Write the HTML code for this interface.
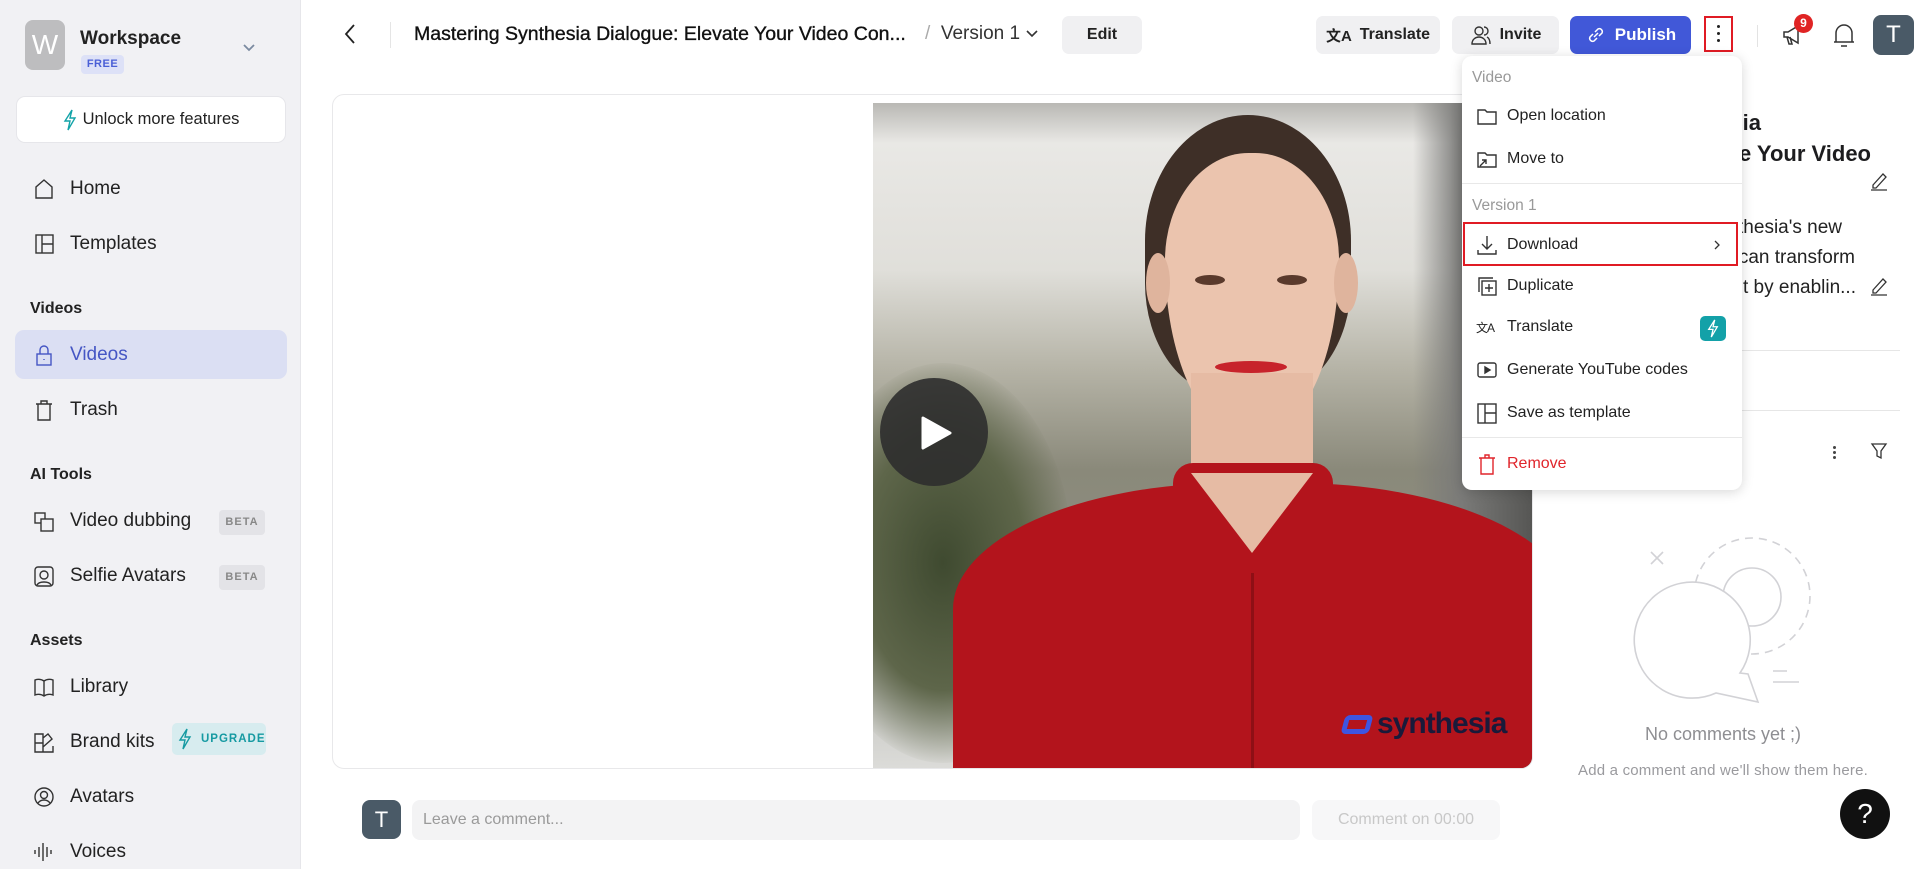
<!DOCTYPE html>
<html style="overflow:hidden"><head><meta charset="utf-8"><style>
*{box-sizing:border-box;margin:0;padding:0}
html,body{width:1920px;height:869px;overflow:hidden}
body{background:#fff;font-family:"Liberation Sans",Arial,"Noto Sans CJK SC",sans-serif;color:#1d1d1f;position:relative}
.a{position:absolute}
.side{left:0;top:0;width:301px;height:869px;background:#f1f1f4;border-right:1px solid #e6e6ea}
.nav{position:absolute;left:33px;font-size:19px;color:#222;display:flex;align-items:center;gap:15px;height:30px;white-space:nowrap}
.nav svg{width:22px;height:22px;fill:none;stroke:#333;stroke-width:1.4;flex:none}
.sec{position:absolute;left:30px;font-size:16px;font-weight:bold;color:#222}
.beta{position:absolute;left:219px;width:46px;height:25px;background:#e3e3e7;border-radius:4px;font-size:11px;color:#888;letter-spacing:1px;text-align:center;line-height:25px;font-weight:bold}
.btn{position:absolute;height:38px;border-radius:7px;background:#f0f0f2;font-size:17px;display:flex;align-items:center;justify-content:center;gap:8px;color:#222;white-space:nowrap}
.mi{position:absolute;left:1476px;font-size:16px;color:#222;display:flex;align-items:center;gap:9px;height:24px;white-space:nowrap}
.mi svg{width:22px;height:22px;fill:none;stroke:#333;stroke-width:1.4;flex:none}
.ml{position:absolute;left:1472px;font-size:15.5px;color:#999}
</style></head><body>
<div class="a side"></div>
<div class="a" style="left:25px;top:20px;width:40px;height:50px;background:#bdbdbf;border-radius:8px;color:#fff;font-size:28px;text-align:center;line-height:50px">W</div>
<div class="a" style="left:80px;top:28px;font-size:19px;font-weight:bold;color:#222">Workspace</div>
<div class="a" style="left:81px;top:55px;width:43px;height:19px;background:#dde1f7;border-radius:4px;color:#4a5fd6;font-size:11px;font-weight:bold;text-align:center;line-height:19px;letter-spacing:.5px">FREE</div>
<svg class="a" style="left:241px;top:42px" width="16" height="12" viewBox="0 0 16 12"><path d="M3 3l5 5 5-5" fill="none" stroke="#7b8aa0" stroke-width="1.8"/></svg>
<div class="a" style="left:16px;top:96px;width:270px;height:47px;background:#fff;border:1px solid #e6e6ea;border-radius:9px;display:flex;align-items:center;justify-content:center;gap:6px;font-size:16.5px;color:#222"><svg width="14" height="22" viewBox="0 0 14 22"><path d="M9 1L2 12h5l-2 9 7-12H7z" fill="none" stroke="#12a3a8" stroke-width="1.4"/></svg>Unlock more features</div>

<div class="nav" style="top:174px"><svg viewBox="0 0 22 22"><path d="M3 20V9l8-7 8 7v11z"/></svg>Home</div>
<div class="nav" style="top:229px"><svg viewBox="0 0 22 22"><rect x="3" y="2" width="17" height="18"/><path d="M9 2v18M9 11h11"/></svg>Templates</div>
<div class="sec" style="top:300px">Videos</div>
<div class="a" style="left:15px;top:330px;width:272px;height:49px;background:#dbdff3;border-radius:9px"></div>
<div class="nav" style="top:340px;color:#4556c4"><svg viewBox="0 0 22 22" style="stroke:#4556c4"><rect x="4" y="10" width="14" height="11"/><path d="M7 10V6a4 4 0 018 0v4M11 15v1"/></svg>Videos</div>
<div class="nav" style="top:395px"><svg viewBox="0 0 22 22"><path d="M5 5h12v16H5zM3 5h16M8 5V2h6v3"/></svg>Trash</div>
<div class="sec" style="top:466px">AI Tools</div>
<div class="nav" style="top:506px"><svg viewBox="0 0 22 22"><rect x="2" y="3" width="10" height="10"/><rect x="8" y="9" width="12" height="12" fill="#f1f1f4"/></svg>Video dubbing</div>
<div class="beta" style="top:510px">BETA</div>
<div class="nav" style="top:561px"><svg viewBox="0 0 22 22"><rect x="2" y="2" width="18" height="19" rx="3"/><circle cx="11" cy="10" r="4"/><path d="M4 20c2-4 12-4 14 0"/></svg>Selfie Avatars</div>
<div class="beta" style="top:565px">BETA</div>
<div class="sec" style="top:632px">Assets</div>
<div class="nav" style="top:672px"><svg viewBox="0 0 22 22"><path d="M11 5C8 3 5 3 2 4v15c3-1 6-1 9 1 3-2 6-2 9-1V4c-3-1-6-1-9 1v15"/></svg>Library</div>
<div class="nav" style="top:727px"><svg viewBox="0 0 22 22"><path d="M2 3h8v18H2zM2 12h8M10 7l5-4 4 5-9 8M10 21h10v-6"/></svg>Brand kits</div>
<div class="a" style="left:172px;top:723px;width:94px;height:32px;background:#d7ecef;border-radius:5px;color:#169aa2;font-size:11.5px;font-weight:bold;letter-spacing:1px;display:flex;align-items:center;gap:9px;padding-left:6px"><svg width="14" height="22" viewBox="0 0 14 22"><path d="M9 1L2 12h5l-2 9 7-12H7z" fill="none" stroke="#169aa2" stroke-width="1.4"/></svg>UPGRADE</div>
<div class="nav" style="top:782px"><svg viewBox="0 0 22 22"><circle cx="11" cy="11" r="9"/><circle cx="11" cy="9" r="3.5"/><path d="M5 17c3-4 9-4 12 0"/></svg>Avatars</div>
<div class="nav" style="top:837px"><svg viewBox="0 0 22 22"><path d="M2 9v4M6 6v10M10 2v18M14 6v10M18 9v4"/></svg>Voices</div>

<!-- top bar -->
<svg class="a" style="left:342px;top:22px" width="18" height="24" viewBox="0 0 18 24"><path d="M12 3L4 12l8 9" fill="none" stroke="#222" stroke-width="1.8"/></svg>
<div class="a" style="left:390px;top:22px;width:1px;height:26px;background:#e5e5e5"></div>
<div class="a" style="left:414px;top:23px;font-size:19.5px;color:#111;-webkit-text-stroke:.35px #111;white-space:nowrap">Mastering Synthesia Dialogue: Elevate Your Video Con...</div>
<div class="a" style="left:925px;top:23px;font-size:19px;color:#333;white-space:nowrap"><span style="color:#aaa">/</span>&nbsp; Version 1 <svg width="14" height="10" viewBox="0 0 14 10"><path d="M2 2l5 5 5-5" fill="none" stroke="#333" stroke-width="1.6"/></svg></div>
<div class="btn" style="left:1062px;top:16px;width:80px;font-weight:bold;font-size:16px">Edit</div>
<div class="btn" style="left:1316px;top:16px;width:124px;font-weight:bold;font-size:16px"><span style="font-size:15px">文A</span>Translate</div>
<div class="btn" style="left:1452px;top:16px;width:107px;font-weight:bold;font-size:16px"><svg width="22" height="22" viewBox="0 0 22 22" fill="none" stroke="#333" stroke-width="1.4"><circle cx="9" cy="7" r="4"/><path d="M2 20c0-5 4-7 7-7s7 2 7 7zM14 3a4 4 0 010 8M17 13c2 1 3 3 3 7"/></svg>Invite</div>
<div class="btn" style="left:1570px;top:16px;width:121px;background:#4158d8;color:#fff;font-weight:bold;font-size:17px"><svg width="22" height="22" viewBox="0 0 22 22" fill="none" stroke="#fff" stroke-width="1.5"><path d="M9 13l4-4M8 10l-3 3a3 3 0 004 4l3-3M14 12l3-3a3 3 0 00-4-4l-3 3"/></svg>Publish</div>
<div class="a" style="left:1704px;top:16px;width:29px;height:36px;border:2px solid #e01b24"></div>
<div class="a" style="left:1717px;top:25px;width:3px;height:3px;background:#222;border-radius:50%;box-shadow:0 7px 0 #222,0 14px 0 #222"></div>
<div class="a" style="left:1757px;top:25px;width:1px;height:22px;background:#e3e3e3"></div>
<svg class="a" style="left:1780px;top:22px" width="26" height="26" viewBox="0 0 26 26" fill="none" stroke="#333" stroke-width="1.5"><path d="M4 10h4l10-6v17l-10-6H4zM7 15l2 7h3l-2-7"/></svg>
<div class="a" style="left:1794px;top:14px;width:19px;height:19px;border-radius:50%;background:#e02424;color:#fff;font-size:12px;font-weight:bold;text-align:center;line-height:19px">9</div>
<svg class="a" style="left:1832px;top:21px" width="24" height="28" viewBox="0 0 24 28" fill="none" stroke="#333" stroke-width="1.5"><path d="M4 21V12a8 8 0 0116 0v9zM2 21h20M9 25h6"/></svg>
<div class="a" style="left:1873px;top:15px;width:41px;height:40px;background:#4a5a67;border-radius:8px;color:#fff;font-size:24px;text-align:center;line-height:40px">T</div>

<!-- video card -->
<div class="a" style="left:332px;top:94px;width:1201px;height:675px;border:1px solid #e8e8ea;border-radius:12px;overflow:hidden;background:#fff">
 <div class="a" style="left:540px;top:8px;width:661px;height:667px;overflow:hidden;background:linear-gradient(180deg,#b9b8b4 0%,#e9e8e5 6%,#e0dfda 25%,#b5b3a6 40%,#8a897a 55%,#8f8f82 75%,#c9c9c5 90%,#dcdcd9 100%)">
  <div class="a" style="left:-60px;top:260px;width:260px;height:400px;border-radius:50%;background:radial-gradient(#3f4a30,#5e664a 45%,rgba(120,120,100,0) 72%)"></div>
  <div class="a" style="left:540px;top:0;width:121px;height:667px;background:linear-gradient(90deg,rgba(100,100,100,0),#7a7a78 40%,#555553)"></div>
  <div class="a" style="left:272px;top:12px;width:206px;height:280px;border-radius:50% 50% 40% 40%/45% 45% 40% 40%;background:#3e2f27"></div>
  <div class="a" style="left:292px;top:50px;width:174px;height:282px;border-radius:48% 48% 46% 46%/38% 38% 62% 62%;background:#ebc4ae"></div>
  <div class="a" style="left:273px;top:150px;width:24px;height:60px;border-radius:50%;background:#dfb49d"></div>
  <div class="a" style="left:461px;top:150px;width:24px;height:60px;border-radius:50%;background:#dfb49d"></div>
  <div class="a" style="left:318px;top:270px;width:122px;height:130px;background:#e6bba4"></div>
  <div class="a" style="left:342px;top:258px;width:72px;height:12px;border-radius:50%;background:#c7232b"></div>
  <div class="a" style="left:322px;top:172px;width:30px;height:10px;border-radius:50%;background:#5a3a2c"></div>
  <div class="a" style="left:404px;top:172px;width:30px;height:10px;border-radius:50%;background:#5a3a2c"></div>
  <div class="a" style="left:80px;top:380px;width:620px;height:420px;border-radius:45% 45% 0 0/30% 30% 0 0;background:#b3141c"></div>
  <div class="a" style="left:300px;top:360px;width:160px;height:140px;background:#b3141c;border-radius:20px 20px 0 0"></div>
  <div class="a" style="left:318px;top:370px;width:122px;height:80px;background:#e6bba4;clip-path:polygon(0 0,100% 0,50% 100%)"></div>
  <div class="a" style="left:378px;top:470px;width:3px;height:200px;background:#8e0f15"></div>
  <div class="a" style="left:470px;top:604px;font-size:30px;font-weight:bold;color:#1a1a3a;letter-spacing:-1px;white-space:nowrap"><span style="display:inline-block;width:28px;height:19px;border:5px solid #3e55e0;border-radius:5px;transform:skewX(-15deg);margin-right:6px;vertical-align:-1px"></span>synthesia</div>
 </div>
 <div class="a" style="left:547px;top:283px;width:108px;height:108px;border-radius:50%;background:rgba(45,45,45,.9)"></div>
 <svg class="a" style="left:586px;top:320px" width="34" height="36" viewBox="0 0 34 36"><path d="M4 3l27 15L4 33z" fill="#fff" stroke="#fff" stroke-width="3" stroke-linejoin="round"/></svg>
</div>

<!-- comment row -->
<div class="a" style="left:362px;top:800px;width:39px;height:39px;background:#4a5a67;border-radius:8px;color:#fff;font-size:22px;text-align:center;line-height:39px">T</div>
<div class="a" style="left:412px;top:800px;width:888px;height:40px;background:#f3f3f4;border-radius:8px;font-size:16px;color:#9a9a9a;padding-left:11px;line-height:40px">Leave a comment...</div>
<div class="a" style="left:1312px;top:800px;width:188px;height:40px;background:#f7f7f8;border-radius:8px;font-size:16px;color:#c8c8c8;text-align:center;line-height:40px">Comment on 00:00</div>

<!-- right panel -->
<div class="a" style="right:159px;top:110px;font-size:22px;font-weight:bold;white-space:nowrap">Mastering Synthesia</div>
<div class="a" style="right:49px;top:141px;font-size:22px;font-weight:bold;white-space:nowrap">Dialogue: Elevate Your Video</div>
<svg class="a" style="left:1869px;top:170px" width="20" height="22" viewBox="0 0 20 22" fill="none" stroke="#333" stroke-width="1.3"><path d="M4 15l10-11 3 3-10 11H4zM2 20h16"/></svg>
<div class="a" style="right:78px;top:217px;font-size:19px;white-space:nowrap;color:#222">Discover Synthesia's new</div>
<div class="a" style="right:65px;top:247px;font-size:19px;white-space:nowrap;color:#222">features that can transform</div>
<div class="a" style="right:64px;top:277px;font-size:19px;white-space:nowrap;color:#222">your content by enablin...</div>
<svg class="a" style="left:1869px;top:275px" width="20" height="22" viewBox="0 0 20 22" fill="none" stroke="#333" stroke-width="1.3"><path d="M4 15l10-11 3 3-10 11H4zM2 20h16"/></svg>
<div class="a" style="left:1557px;top:350px;width:343px;height:1px;background:#e6e6e6"></div>
<div class="a" style="left:1557px;top:410px;width:343px;height:1px;background:#e6e6e6"></div>
<div class="a" style="left:1833px;top:446px;width:3px;height:3px;background:#444;border-radius:50%;box-shadow:0 5px 0 #444,0 10px 0 #444"></div>
<svg class="a" style="left:1870px;top:442px" width="18" height="18" viewBox="0 0 18 18"><path d="M2 2h14l-5 7v7l-4-2V9z" fill="none" stroke="#333" stroke-width="1.3"/></svg>
<svg class="a" style="left:1620px;top:530px" width="200" height="180" viewBox="1620 530 200 180" fill="none" stroke="#d2d2d6" stroke-width="1.6">
 <path d="M1651 552l12 12M1663 552l-12 12"/>
 <circle cx="1752" cy="596" r="58" stroke-dasharray="8 6"/>
 <circle cx="1752" cy="597" r="29"/>
 <path d="M1740 673a58 58 0 10-24 20l42 9-10-28z" fill="#fff"/>
 <path d="M1773 671h14M1773 682h26"/>
</svg>
<div class="a" style="left:1600px;top:724px;width:246px;text-align:center;font-size:18px;color:#8e8e92">No comments yet ;)</div>
<div class="a" style="left:1560px;top:762px;width:326px;text-align:center;font-size:15px;color:#9a9a9e;letter-spacing:.2px;white-space:nowrap">Add a comment and we'll show them here.</div>
<div class="a" style="left:1840px;top:789px;width:50px;height:50px;border-radius:50%;background:#111;color:#fff;font-size:28px;text-align:center;line-height:50px">?</div>

<!-- menu -->
<div class="a" style="left:1462px;top:56px;width:280px;height:434px;background:#fff;border-radius:10px;box-shadow:0 2px 12px rgba(0,0,0,.16)"></div>
<div class="ml" style="top:69px">Video</div>
<div class="mi" style="top:104px"><svg viewBox="0 0 22 22"><path d="M2 5h7l2 2h9v12H2z"/></svg>Open location</div>
<div class="mi" style="top:147px"><svg viewBox="0 0 22 22"><path d="M2 5h7l2 2h9v12H2zM4 18l6-6M6 12h4v4"/></svg>Move to</div>
<div class="a" style="left:1462px;top:183px;width:280px;height:1px;background:#e8e8e8"></div>
<div class="ml" style="top:197px">Version 1</div>
<div class="a" style="left:1463px;top:222px;width:275px;height:44px;border:2px solid #e01b24"></div>
<div class="mi" style="top:233px"><svg viewBox="0 0 22 22"><path d="M11 2v13M6 10l5 5 5-5M2 16v4h18v-4"/></svg>Download</div>
<svg class="a" style="left:1712px;top:239px" width="10" height="12" viewBox="0 0 10 12"><path d="M3 2l4 4-4 4" fill="none" stroke="#333" stroke-width="1.3"/></svg>
<div class="mi" style="top:274px"><svg viewBox="0 0 22 22"><path d="M3 17V3h14"/><rect x="6" y="6" width="14" height="14"/><path d="M13 9v8M9 13h8"/></svg>Duplicate</div>
<div class="mi" style="top:315px"><span style="width:22px;font-size:12px;letter-spacing:-1px;white-space:nowrap">文A</span>Translate</div>
<div class="a" style="left:1700px;top:316px;width:26px;height:25px;background:#13a1a8;border-radius:5px"></div>
<svg class="a" style="left:1707px;top:319px" width="12" height="19" viewBox="0 0 14 22"><path d="M9 1L2 12h5l-2 9 7-12H7z" fill="none" stroke="#fff" stroke-width="1.5"/></svg>
<div class="mi" style="top:358px"><svg viewBox="0 0 22 22"><rect x="2" y="4" width="18" height="14" rx="2"/><path d="M9 8l5 3-5 3z" fill="#333"/></svg>Generate YouTube codes</div>
<div class="mi" style="top:401px"><svg viewBox="0 0 22 22"><rect x="2" y="2" width="18" height="19"/><path d="M9 2v19M9 11h11"/></svg>Save as template</div>
<div class="a" style="left:1462px;top:437px;width:280px;height:1px;background:#e8e8e8"></div>
<div class="mi" style="top:452px;color:#e0252b"><svg viewBox="0 0 22 22" style="stroke:#e0252b"><path d="M5 5h12v16H5zM3 5h16M9 5V2h4v3"/></svg>Remove</div>
</body></html>
